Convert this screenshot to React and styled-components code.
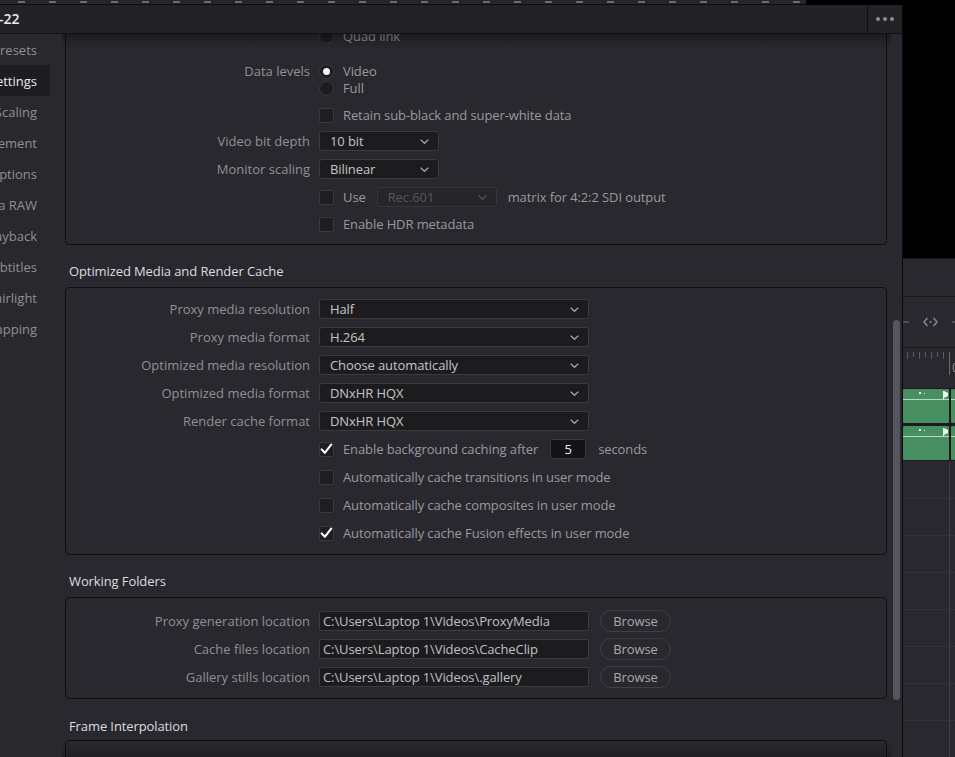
import React from "react";
import styled, { createGlobalStyle } from "styled-components";

const GlobalStyle = createGlobalStyle`
  * { box-sizing: border-box; }
  html, body { margin: 0; padding: 0; background: #000; }
  body {
    font-family: "Open Sans", "Noto Sans", sans-serif;
    font-size: 13px;
    letter-spacing: -0.1px;
    -webkit-font-smoothing: antialiased;
  }
`;

const Page = styled.div`
  width: 955px;
  height: 757px;
  overflow: hidden;
  display: flex;
  flex-direction: column;
  background: #000;
`;

const BackStrip = styled.div`
  height: 5px;
  flex: none;
  display: flex;
`;

const BackStripBar = styled.div`
  width: 806px;
  height: 5px;
  border-bottom: 1px solid #0b0b0d;
  background-color: #26262a;
  background-image: repeating-linear-gradient(
    90deg,
    transparent 0 18px,
    #6a6a70 18px 25px,
    transparent 25px 31px
  );
  background-size: 100% 2px;
  background-repeat: no-repeat;
  background-position: 0 1px;
`;

const Main = styled.div`
  flex: 1;
  display: flex;
  min-height: 0;
`;

const Dialog = styled.div`
  width: 903px;
  flex: none;
  display: flex;
  flex-direction: column;
  background: #28282e;
  border-right: 1px solid #0a0a0b;
`;

const TitleBar = styled.div`
  height: 29px;
  flex: none;
  display: flex;
  background: #232327;
  border-bottom: 1px solid #101012;
`;

const Title = styled.div`
  flex: 1;
  margin-left: -1px;
  line-height: 28px;
  font-size: 14px;
  font-weight: 600;
  letter-spacing: 0;
  color: #ececee;
  white-space: nowrap;
  overflow: hidden;
`;

const MenuButton = styled.div`
  width: 35px;
  flex: none;
  display: flex;
  align-items: center;
  justify-content: center;
  gap: 3px;
  border-left: 1px solid #101012;
`;

const Dot = styled.span`
  width: 4px;
  height: 4px;
  border-radius: 50%;
  background: #8c8c90;
`;

const Body = styled.div`
  flex: 1;
  display: flex;
  min-height: 0;
`;

const Sidebar = styled.div`
  width: 62px;
  flex: none;
  display: flex;
  flex-direction: column;
  background: #28282d;
`;

const NavItem = styled.div`
  width: 50px;
  height: 31px;
  flex: none;
  display: flex;
  align-items: center;
  justify-content: flex-end;
  padding-right: 13px;
  overflow: hidden;
  white-space: nowrap;
  letter-spacing: 0;
  color: ${(p) => (p.$active ? "#e9e9eb" : "#8e9095")};
  background: ${(p) => (p.$active ? "#1d1d21" : "transparent")};
`;

const ContentArea = styled.div`
  flex: 1;
  min-width: 0;
  display: flex;
  position: relative;
`;

const Scroller = styled.div`
  width: 825px;
  flex: none;
  padding-left: 3px;
  overflow: hidden;
`;

const Inner = styled.div`
  margin-top: -18px;
  display: flex;
  flex-direction: column;
`;

const ScrollTrack = styled.div`
  flex: 1;
  padding-top: 286px;
  padding-left: 6px;
`;

const Thumb = styled.div`
  width: 7px;
  height: 380px;
  border-radius: 4px;
  background: #53565c;
`;

const Shade = styled.div`
  position: absolute;
  left: 0;
  right: 11px;
  height: 14px;
  pointer-events: none;
  ${(p) =>
    p.$bottom
      ? "bottom: 0; background: linear-gradient(rgba(8,8,10,0), rgba(8,8,10,0.28));"
      : "top: 0; background: linear-gradient(rgba(8,8,10,0.4), rgba(8,8,10,0));"}
`;

const GroupBox = styled.div`
  flex: none;
  border: 1px solid #0f0f11;
  border-radius: 4px;
  padding: ${(p) => p.$pt}px 0 ${(p) => p.$pb}px;
  display: flex;
  flex-direction: column;
  & > :first-child {
    margin-top: 0;
  }
`;

const SectionTitle = styled.div`
  padding: ${(p) => p.$pt ?? 16}px 4px ${(p) => p.$pb ?? 6}px;
  line-height: 20px;
  color: #dcdde0;
  white-space: nowrap;
`;

const Row = styled.div`
  flex: none;
  display: grid;
  grid-template-columns: 244px 1fr;
  column-gap: 9px;
  align-items: center;
  height: ${(p) => p.$h ?? 20}px;
  margin-top: ${(p) => p.$mt ?? 8}px;
`;

const Label = styled.div`
  text-align: right;
  color: #8f9196;
  white-space: nowrap;
  line-height: 20px;
  letter-spacing: 0;
`;

const Field = styled.div`
  display: flex;
  align-items: center;
  gap: ${(p) => p.$gap ?? 10}px;
  height: 100%;
  min-width: 0;
`;

const Option = styled.label`
  display: inline-flex;
  align-items: center;
  gap: 9px;
  color: #989a9f;
  white-space: nowrap;
  line-height: 18px;
`;

const Plain = styled.span`
  color: #989a9f;
  white-space: nowrap;
`;

const CheckBox = styled.span`
  width: 15px;
  height: 15px;
  flex: none;
  display: flex;
  align-items: center;
  justify-content: center;
  border-radius: 2px;
  background: #1e1e21;
  border: 1px solid #39393e;
`;

const Radio = styled.span`
  width: 15px;
  height: 15px;
  flex: none;
  display: flex;
  align-items: center;
  justify-content: center;
  border-radius: 50%;
  background: #1d1d20;
  border: 1px solid #3a3a3f;
  &::after {
    content: "";
    width: 7px;
    height: 7px;
    border-radius: 50%;
    background: #f2f2f2;
    display: ${(p) => (p.$on ? "block" : "none")};
  }
`;

const Select = styled.div`
  width: ${(p) => p.$w}px;
  height: 20px;
  flex: none;
  display: flex;
  align-items: center;
  justify-content: space-between;
  padding: 0 9px 0 10px;
  border-radius: 3px;
  background: ${(p) => (p.$disabled ? "#25252a" : "#1c1c1f")};
  border: 1px solid ${(p) => (p.$disabled ? "#36363b" : "#3a3a3f")};
  color: ${(p) => (p.$disabled ? "#55565b" : "#c3c4c8")};
  white-space: nowrap;
`;

const NumberBox = styled.div`
  width: 36px;
  height: 20px;
  flex: none;
  display: flex;
  align-items: center;
  justify-content: center;
  border-radius: 2px;
  background: #141416;
  border: 1px solid #3a3a3f;
  color: #ececee;
`;

const PathField = styled.div`
  width: 270px;
  height: 20px;
  flex: none;
  display: flex;
  align-items: center;
  padding-left: 3px;
  border-radius: 2px;
  background: #1c1c1f;
  border: 1px solid #3a3a3f;
  color: #bfc0c4;
  white-space: nowrap;
  overflow: hidden;
`;

const BrowseButton = styled.button`
  width: 71px;
  height: 22px;
  flex: none;
  margin-left: 1px;
  border-radius: 11px;
  border: 1px solid #3f3f45;
  background: transparent;
  color: #a7a8ac;
  font-family: inherit;
  font-size: 13px;
  letter-spacing: -0.1px;
  padding: 0;
`;

/* right-hand timeline pane */
const Side = styled.div`
  flex: 1;
  min-width: 0;
  display: flex;
  flex-direction: column;
  position: relative;
  background: #28282e;
`;

const SideTop = styled.div`
  height: 254px;
  flex: none;
  background: #000;
  border-bottom: 1px solid #19191c;
`;

const SideBand = styled.div`
  height: ${(p) => p.$h}px;
  flex: none;
  display: flex;
  align-items: center;
  justify-content: space-between;
  border-bottom: 1px solid #19191c;
  background: #28282e;
`;

const ToolDash = styled.span`
  width: ${(p) => p.$w}px;
  height: 2px;
  background: #4f4f55;
`;

const Tracks = styled.div`
  flex: none;
  display: flex;
  flex-direction: column;
  gap: 3px;
  background: #1c1c1f;
  border-bottom: 1px solid #1c1c1f;
`;

const Track = styled.div`
  height: 34px;
  display: flex;
  gap: 2px;
`;

const Clip = styled.div`
  width: ${(p) => (p.$w ? `${p.$w}px` : "auto")};
  flex: ${(p) => (p.$w ? "none" : "1")};
  background: #478e61;
  border-radius: 1px;
`;

const Lanes = styled.div`
  flex: 1;
  padding-top: 1px;
  display: flex;
  flex-direction: column;
`;

const Lane = styled.div`
  height: 37px;
  flex: none;
  border-bottom: 1px solid #313137;
`;

const PlayLine = styled.div`
  position: absolute;
  left: 46px;
  top: 456px;
  bottom: 0;
  width: 1px;
  background: #3d3d43;
`;

const Chevron = ({ color = "#a9aaae" }) => (
  <svg width="9" height="5" viewBox="0 0 9 5">
    <polyline points="0.6,0.6 4.5,4.3 8.4,0.6" fill="none" stroke={color} strokeWidth="1.3" />
  </svg>
);

const Check = () => (
  <svg width="13" height="12" viewBox="0 0 13 12">
    <polyline points="1.6,6.4 4.8,9.8 11.2,1.6" fill="none" stroke="#ffffff" strokeWidth="2.1" strokeLinecap="round" strokeLinejoin="round" />
  </svg>
);

const ClipArt = ({ w }) => (
  <svg width="100%" height="34" viewBox={`0 0 ${w} 34`} preserveAspectRatio="none" style={{ display: "block" }}>
    <line x1="0" y1="10.5" x2={w} y2="10.5" stroke="#b4dcc1" strokeWidth="1" />
    {w > 20 && (
      <>
        <rect x="16" y="3" width="2" height="2" fill="#e8f4ec" />
        <rect x="21" y="4" width="1" height="1" fill="#e8f4ec" />
        <polygon points={`${w - 5},2 ${w - 1},4 ${w - 1},7 ${w - 5},9`} fill="#eef8f1" />
        <rect x={w - 6} y="2" width="1" height="8" fill="#eef8f1" />
      </>
    )}
  </svg>
);

const navItems = [
  "Presets",
  "Master Settings",
  "Image Scaling",
  "Color Management",
  "General Options",
  "Camera RAW",
  "Capture and Playback",
  "Subtitles",
  "Fairlight",
  "Audio Mapping",
];

const SelectRow = ({ label, value }) => (
  <Row>
    <Label>{label}</Label>
    <Field>
      <Select $w={270}>
        <span>{value}</span>
        <Chevron />
      </Select>
    </Field>
  </Row>
);

const CheckRow = ({ text, checked }) => (
  <Row>
    <Label />
    <Field>
      <Option>
        <CheckBox>{checked && <Check />}</CheckBox>
        {text}
      </Option>
    </Field>
  </Row>
);

const FolderRow = ({ label, path }) => (
  <Row>
    <Label>{label}</Label>
    <Field>
      <PathField>{path}</PathField>
      <BrowseButton>Browse</BrowseButton>
    </Field>
  </Row>
);

export default function App() {
  return (
    <>
      <GlobalStyle />
      <Page>
        <BackStrip>
          <BackStripBar />
        </BackStrip>
        <Main>
          <Dialog>
            <TitleBar>
              <Title>-22</Title>
              <MenuButton>
                <Dot />
                <Dot />
                <Dot />
              </MenuButton>
            </TitleBar>
            <Body>
              <Sidebar>
                {navItems.map((t, i) => (
                  <NavItem key={t} $active={i === 1}>
                    {t}
                  </NavItem>
                ))}
              </Sidebar>
              <ContentArea>
                <Scroller>
                  <Inner>
                    <GroupBox $pt={10} $pb={10}>
                      <Row $h={18}>
                        <Label />
                        <Field>
                          <Option>
                            <Radio />
                            Quad link
                          </Option>
                        </Field>
                      </Row>
                      <Row $h={18} $mt={16}>
                        <Label>Data levels</Label>
                        <Field>
                          <Option>
                            <Radio $on />
                            Video
                          </Option>
                        </Field>
                      </Row>
                      <Row $h={18} $mt={0}>
                        <Label />
                        <Field>
                          <Option>
                            <Radio />
                            Full
                          </Option>
                        </Field>
                      </Row>
                      <Row $mt={8}>
                        <Label />
                        <Field>
                          <Option>
                            <CheckBox />
                            Retain sub-black and super-white data
                          </Option>
                        </Field>
                      </Row>
                      <Row $mt={6}>
                        <Label>Video bit depth</Label>
                        <Field>
                          <Select $w={120}>
                            <span>10 bit</span>
                            <Chevron />
                          </Select>
                        </Field>
                      </Row>
                      <Row>
                        <Label>Monitor scaling</Label>
                        <Field>
                          <Select $w={120}>
                            <span>Bilinear</span>
                            <Chevron />
                          </Select>
                        </Field>
                      </Row>
                      <Row>
                        <Label />
                        <Field $gap={11}>
                          <Option>
                            <CheckBox />
                            Use
                          </Option>
                          <Select $w={120} $disabled>
                            <span>Rec.601</span>
                            <Chevron color="#55565b" />
                          </Select>
                          <Plain>matrix for 4:2:2 SDI output</Plain>
                        </Field>
                      </Row>
                      <Row $mt={7}>
                        <Label />
                        <Field>
                          <Option>
                            <CheckBox />
                            Enable HDR metadata
                          </Option>
                        </Field>
                      </Row>
                    </GroupBox>

                    <SectionTitle>Optimized Media and Render Cache</SectionTitle>
                    <GroupBox $pt={11} $pb={11}>
                      <SelectRow label="Proxy media resolution" value="Half" />
                      <SelectRow label="Proxy media format" value="H.264" />
                      <SelectRow label="Optimized media resolution" value="Choose automatically" />
                      <SelectRow label="Optimized media format" value="DNxHR HQX" />
                      <SelectRow label="Render cache format" value="DNxHR HQX" />
                      <Row>
                        <Label />
                        <Field $gap={12}>
                          <Option>
                            <CheckBox>
                              <Check />
                            </CheckBox>
                            Enable background caching after
                          </Option>
                          <NumberBox>5</NumberBox>
                          <Plain>seconds</Plain>
                        </Field>
                      </Row>
                      <CheckRow text="Automatically cache transitions in user mode" />
                      <CheckRow text="Automatically cache composites in user mode" />
                      <CheckRow text="Automatically cache Fusion effects in user mode" checked />
                    </GroupBox>

                    <SectionTitle>Working Folders</SectionTitle>
                    <GroupBox $pt={12} $pb={12}>
                      <FolderRow label="Proxy generation location" path="C:\Users\Laptop 1\Videos\ProxyMedia" />
                      <FolderRow label="Cache files location" path="C:\Users\Laptop 1\Videos\CacheClip" />
                      <FolderRow label="Gallery stills location" path="C:\Users\Laptop 1\Videos\.gallery" />
                    </GroupBox>

                    <SectionTitle $pt={17} $pb={4}>Frame Interpolation</SectionTitle>
                    <GroupBox $pt={16} $pb={12}>
                      <SelectRow label="Retime process" value="Nearest" />
                      <SelectRow label="Motion estimation mode" value="Standard Faster" />
                    </GroupBox>
                  </Inner>
                </Scroller>
                <ScrollTrack>
                  <Thumb />
                </ScrollTrack>
                <Shade />
                <Shade $bottom />
              </ContentArea>
            </Body>
          </Dialog>

          <Side>
            <SideTop />
            <SideBand $h={38} />
            <SideBand $h={51}>
              <ToolDash $w={6} />
              <svg width="15" height="10" viewBox="0 0 15 10">
                <polyline points="4.5,1 1,5 4.5,9" fill="none" stroke="#8a8a90" strokeWidth="1.4" />
                <polyline points="10.5,1 14,5 10.5,9" fill="none" stroke="#8a8a90" strokeWidth="1.4" />
                <circle cx="7.5" cy="5" r="1" fill="#8a8a90" />
              </svg>
              <ToolDash $w={3} />
            </SideBand>
            <SideBand $h={41}>
              <svg width="52" height="40" viewBox="0 0 52 40" style={{ display: "block" }}>
                {[4, 10, 16, 22, 28, 34, 40].map((x) => (
                  <line key={x} x1={x + 0.5} y1="4" x2={x + 0.5} y2={x % 12 === 4 ? 11 : 9} stroke="#5a5a60" strokeWidth="1" />
                ))}
                <line x1="46.5" y1="4" x2="46.5" y2="27" stroke="#6a6a70" strokeWidth="1" />
                <text x="49" y="24" fill="#8c8d92" fontSize="12" fontFamily="Open Sans, sans-serif">0</text>
              </svg>
            </SideBand>
            <Tracks>
              <Track>
                <Clip $w={46}>
                  <ClipArt w={46} />
                </Clip>
                <Clip>
                  <ClipArt w={4} />
                </Clip>
              </Track>
              <Track>
                <Clip $w={46}>
                  <ClipArt w={46} />
                </Clip>
                <Clip>
                  <ClipArt w={4} />
                </Clip>
              </Track>
            </Tracks>
            <Lanes>
              {Array.from({ length: 8 }).map((_, i) => (
                <Lane key={i} />
              ))}
            </Lanes>
            <PlayLine />
          </Side>
        </Main>
      </Page>
    </>
  );
}
